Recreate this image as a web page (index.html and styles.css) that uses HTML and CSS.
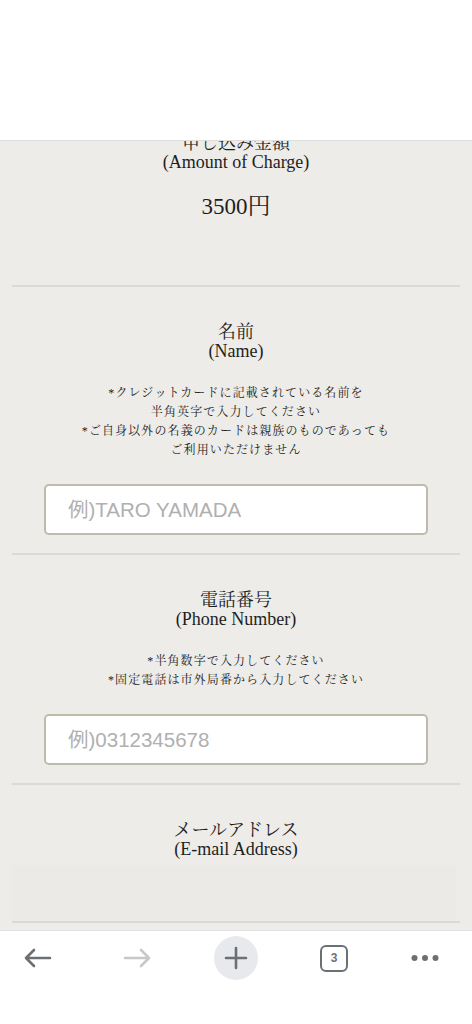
FILE: index.html
```html
<!DOCTYPE html>
<html lang="ja">
<head>
  <meta charset="UTF-8">
  <meta name="viewport" content="width=device-width, initial-scale=1.0">
  <title>お申し込みフォーム</title>
  <link rel="stylesheet" href="styles.css">
</head>
<body>
    <div class="topbar"></div>

    <main class="viewport">
        <div class="form">
            <section class="field field-amount">
                <h2 class="field-title">申し込み金額<br>(Amount of Charge)</h2>
                <p class="amount">3500円</p>
            </section>

            <section class="field">
                <h2 class="field-title">名前<br>(Name)</h2>
                <p class="note">*クレジットカードに記載されている名前を<br>半角英字で入力してください<br>*ご自身以外の名義のカードは親族のものであっても<br>ご利用いただけません</p>
                <input class="text-input" type="text" placeholder="例)TARO YAMADA">
            </section>

            <section class="field">
                <h2 class="field-title">電話番号<br>(Phone Number)</h2>
                <p class="note">*半角数字で入力してください<br>*固定電話は市外局番から入力してください</p>
                <input class="text-input" type="tel" placeholder="例)0312345678">
            </section>

            <section class="field field-mail">
                <h2 class="field-title">メールアドレス<br>(E-mail Address)</h2>
                <div class="mail-box"></div>
            </section>
        </div>
    </main>

    <nav class="toolbar">
        <div class="tool">
            <svg width="30" height="22" viewBox="0 0 30 22" fill="none" stroke="#6b7075" stroke-width="2.6" stroke-linecap="round" stroke-linejoin="round">
                <path d="M27 11H3M11 3L3 11L11 19"/>
            </svg>
        </div>
        <div class="tool">
            <svg width="30" height="22" viewBox="0 0 30 22" fill="none" stroke="#c6c8cb" stroke-width="2.6" stroke-linecap="round" stroke-linejoin="round">
                <path d="M3 11H27M19 3L27 11L19 19"/>
            </svg>
        </div>
        <div class="tool">
            <div class="plus-btn">
                <svg width="24" height="24" viewBox="0 0 24 24" fill="none" stroke="#6b7075" stroke-width="2.6" stroke-linecap="round">
                    <path d="M12 2V22M2 12H22"/>
                </svg>
            </div>
        </div>
        <div class="tool">
            <div class="tabs-btn">3</div>
        </div>
        <div class="tool">
            <svg width="28" height="8" viewBox="0 0 28 8" fill="#6b7075">
                <circle cx="3.5" cy="4" r="3"/>
                <circle cx="14" cy="4" r="3"/>
                <circle cx="24.5" cy="4" r="3"/>
            </svg>
        </div>
    </nav>
</body>
</html>
```

FILE: styles.css
```css
* {
  margin: 0;
  padding: 0;
  box-sizing: border-box;
}

body {
  height: 100vh;
  display: flex;
  flex-direction: column;
  background: #ffffff;
  font-family: 'Liberation Serif', 'Noto Serif CJK JP', 'Noto Sans CJK JP', serif;
  color: #1e1e1e;
}

/* white area above the page */
.topbar {
  height: 141px;
  flex-shrink: 0;
  background: #ffffff;
  border-bottom: 1px solid #dedede;
}

.viewport {
  flex: 1;
  overflow: hidden;
  background: #edece8;
}

.form {
  margin-top: -43px;
}

.field {
  display: flex;
  flex-direction: column;
  align-items: center;
  padding: 36px 0 18px;
  margin: 0 12px;
  border-bottom: 2px solid #dad9d4;
}

.field-title {
  font-size: 18px;
  line-height: 19px;
  font-weight: normal;
  text-align: center;
}

.field-amount {
  padding-bottom: 63px;
}

.amount {
  margin-top: 20px;
  font-size: 23px;
  line-height: 30px;
}

.note {
  margin-top: 23px;
  font-size: 12px;
  line-height: 19px;
  letter-spacing: 1.1px;
  text-align: center;
  color: #1e1e1e;
}

.text-input {
  width: 384px;
  height: 51px;
  margin-top: 24px;
  padding: 0 22px;
  border: 2px solid #bdbcac;
  border-radius: 5px;
  background: #ffffff;
  font-family: 'Liberation Sans', 'Noto Sans CJK JP', sans-serif;
  font-size: 20.5px;
  color: #333;
  outline: none;
}

.text-input::placeholder {
  color: #b0b0b0;
}

.field-mail {
  padding-bottom: 0;
}

.mail-box {
  align-self: stretch;
  height: 56px;
  margin: 6px 4px 0 0;
  background: #ebeae6;
}

/* browser toolbar */
.toolbar {
  height: 94px;
  flex-shrink: 0;
  display: grid;
  grid-template-columns: 76px 122px 76px 120px 62px;
  align-items: start;
  padding-top: 5px;
  background: #ffffff;
  border-top: 1px solid #e3e3e3;
}

.tool {
  height: 44px;
  display: flex;
  align-items: center;
  justify-content: center;
}

.plus-btn {
  width: 44px;
  height: 44px;
  border-radius: 50%;
  background: #e8e9ec;
  display: flex;
  align-items: center;
  justify-content: center;
}

.tabs-btn {
  width: 28px;
  height: 27px;
  border: 2.5px solid #6b7075;
  border-radius: 6px;
  display: flex;
  align-items: center;
  justify-content: center;
  font-family: 'Liberation Sans', sans-serif;
  font-size: 12px;
  font-weight: bold;
  color: #6b7075;
}
```
